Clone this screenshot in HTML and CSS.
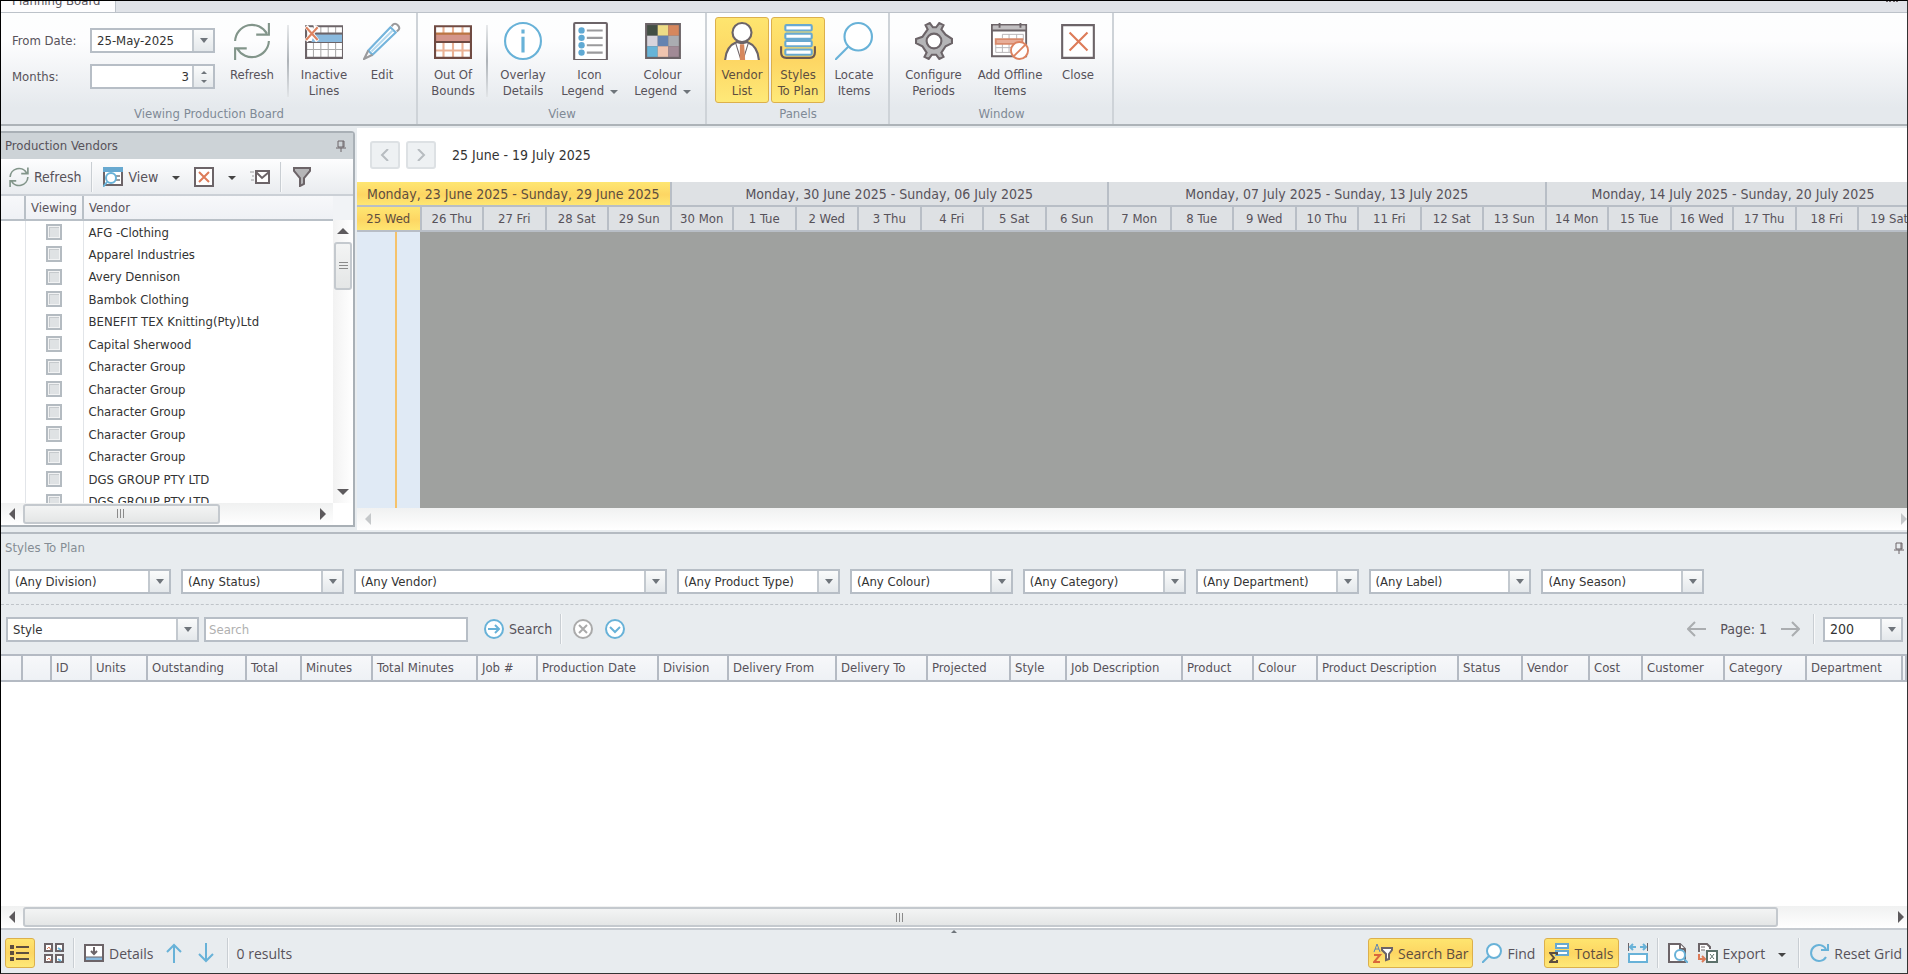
FILE: index.html
```
<!DOCTYPE html>
<html lang="en">
<head>
    <meta charset="UTF-8">
    <meta name="viewport" content="width=device-width, initial-scale=1.0">
    <title>Planning Board</title>
    <link rel="stylesheet" href="styles.css">
</head>
<body>
    <header>
        <div class="tabs">
            <a class="tab" href="#ribbon">Planning Board</a>
            <span class="tabs-more"></span>
        </div>

        <div class="ribbon" id="ribbon">
            <section class="group">
                <div class="group-items">
                    <div class="fields">
                        <label for="fromDate">From Date:</label>
                        <div class="combo">
                            <select id="fromDate"><option>25-May-2025</option></select>
                        </div>
                        <label for="months">Months:</label>
                        <div class="spinner">
                            <input type="text" id="months" value="3">
                            <span class="spin"><i class="caret up"></i><i class="caret"></i></span>
                        </div>
                    </div>
                    <button type="button" class="big w60">
                        <svg viewBox="0 0 36 36" fill="none" stroke="#82958a" stroke-width="2"><path d="M2 18A16 16 0 0 1 32 11M34 1V12H22M34 18A16 16 0 0 1 4 25M2 36V25H13"/></svg>
                        <span>Refresh</span>
                    </button>
                    <i class="sep tall"></i>
                    <button type="button" class="big w60">
                        <svg viewBox="0 0 36 36" fill="none"><path d="M1 4H35V34H1Z" fill="#fff"/><path d="M8 4V34M15 4V34M22 4V34M29 4V34M1 26H35" stroke="#aaa" /><path d="M9 11H36V20H6Z" fill="#8abade"/><path d="M1 11V34H36V4H10M1 12V4H8M9 11H35M1 19H35" stroke="#6c6468" stroke-width="2"/><path d="M9 12H35V19H6Z" fill="#8abade"/><path d="M1 4L12 18M12 4L1 18" stroke="#fff" stroke-width="4"/><path d="M1 5L12 17M12 5L1 17" stroke="#dd8360" stroke-width="2"/></svg>
                        <span>Inactive<br>Lines</span>
                    </button>
                    <button type="button" class="big w56">
                        <svg viewBox="0 0 36 36" fill="none" stroke-width="2"><path d="M5 27L26 5L31 10L9 31Z" fill="#fff" stroke="#74b4dc"/><path d="M8 28L28 8" stroke="#b5d9ee"/><path d="M27 4L29 2Q31 1 33 3Q35 5 34 7L32 9M5 27L1 35L9 31" stroke="#9a9a9c"/></svg>
                        <span>Edit</span>
                    </button>
                </div>
                <h2>Viewing Production Board</h2>
            </section>

            <section class="group">
                <div class="group-items">
                    <button type="button" class="big w56">
                        <svg viewBox="0 0 36 36" fill="none"><path d="M0 4H36V34H0Z" fill="#fff"/><path d="M9 4V34M18 4V34M27 4V34M0 27H36" stroke="#eab295" stroke-width="2"/><path d="M0 11H36V19H0Z" fill="#d4958a"/><path d="M0 11H36" stroke="#bb7542" stroke-width="2"/><path d="M0 19H36M1 4H35V34H1Z" stroke="#6f4a42" stroke-width="2"/></svg>
                        <span>Out Of<br>Bounds</span>
                    </button>
                    <i class="sep tall"></i>
                    <button type="button" class="big w60">
                        <svg viewBox="0 0 36 36" fill="none" stroke="#68b2d8"><circle cx="18" cy="18" r="17" fill="#fff" stroke-width="2"/><path d="M18 14V29M18 7V11" stroke-width="3"/></svg>
                        <span>Overlay<br>Details</span>
                    </button>
                    <button type="button" class="big w72">
                        <svg viewBox="0 0 36 36" fill="none"><rect x="3" y="1" width="31" height="35" rx="1" fill="#fff" stroke="#6c6468" stroke-width="2"/><g fill="#5fa9d3"><circle cx="10" cy="8" r="3"/><circle cx="10" cy="15" r="3"/><circle cx="10" cy="22" r="3"/><circle cx="10" cy="29" r="3"/></g><path d="M15 8H30M15 15H30M15 22H30M15 29H30" stroke="#9a9a9c" stroke-width="2"/></svg>
                        <span>Icon<br>Legend <i class="caret"></i></span>
                    </button>
                    <button type="button" class="big w72">
                        <svg viewBox="0 0 36 36"><path d="M1 1H35V35H1Z" fill="#6c6468"/><path d="M3 3h10v10H3z" fill="#434f44"/><path d="M13 3h10v10H13z" fill="#eddc86"/><path d="M23 3h10v10H23z" fill="#d6875d"/><path d="M3 13h10v10H3z" fill="#d8d4dc"/><path d="M13 13h10v10H13z" fill="#6583b0"/><path d="M23 13h10v10H23z" fill="#aaacb1"/><path d="M3 23h10v10H3z" fill="#67b4d8"/><path d="M13 23h10v10H13z" fill="#f0c4af"/><path d="M23 23h10v10H23z" fill="#a18a96"/></svg>
                        <span>Colour<br>Legend <i class="caret"></i></span>
                    </button>
                </div>
                <h2>View</h2>
            </section>

            <section class="group">
                <div class="group-items">
                    <button type="button" class="big w54 on">
                        <svg viewBox="0 0 36 36" fill="#fff" stroke="#6c6468" stroke-width="2"><circle cx="18" cy="10" r="9"/><path d="M2 36Q3 23 13 19Q18 21 23 19Q33 23 34 36" /><path d="M12 20L17 36M24 20L19 36" fill="none" stroke-width="1"/><path d="M16 21H20L21 36H16Z" fill="#d6875d" stroke="none"/></svg>
                        <span>Vendor<br>List</span>
                    </button>
                    <button type="button" class="big w54 on">
                        <svg viewBox="0 0 36 36" fill="#fff" stroke="#68a9d0" stroke-width="2"><path d="M2 23V29Q2 34 7 34H29Q34 34 34 29V23" fill="none" stroke="#6c5a50"/><rect x="6" y="3" width="25" height="5" rx="1"/><rect x="6" y="11" width="25" height="5" rx="1"/><rect x="6" y="18" width="25" height="5" rx="1"/><rect x="6" y="26" width="25" height="5" rx="1"/></svg>
                        <span>Styles<br>To Plan</span>
                    </button>
                    <button type="button" class="big w56">
                        <svg viewBox="0 0 36 36" fill="#fff" stroke="#68b2d8" stroke-width="2"><circle cx="22" cy="14" r="13"/><path d="M13 23L0 36"/></svg>
                        <span>Locate<br>Items</span>
                    </button>
                </div>
                <h2>Panels</h2>
            </section>

            <section class="group">
                <div class="group-items">
                    <button type="button" class="big w72">
                        <svg viewBox="0 0 36 36" fill="#b5b5b7" stroke="#6c6468" stroke-width="2"><path d="M12 7L10 3L14 1L17 5H20L23 1L27 3L25 7L29 12L35 16V20L29 23L25 29L27 33L23 35L20 31H16L13 35L9 33L11 29L7 23L1 20V16L7 14Z"/><circle cx="18" cy="18" r="7" fill="#fff"/></svg>
                        <span>Configure<br>Periods</span>
                    </button>
                    <button type="button" class="big w80">
                        <svg viewBox="0 0 40 38" fill="none" stroke="#6c6468" stroke-width="2"><path d="M1 2H37V35H1Z" fill="#fff"/><path d="M2 3H36V8H2Z" fill="#c2c0c2" stroke="none"/><path d="M1 8H37M9 0V5M31 0V5"/><path d="M12 12H34V18M12 12V16M19 12V31M27 12V31M5 22V31H26M5 26H28M12 20V31" stroke="#b6b3b6" stroke-width="1"/><path d="M5 17H33V22H5Z" stroke="#d88a6c" fill="#e7ad98"/><circle cx="30" cy="29" r="9" stroke="#dd8360" fill="#fff"/><path d="M24 35L36 23" stroke="#dd8360"/></svg>
                        <span>Add Offline<br>Items</span>
                    </button>
                    <button type="button" class="big w56">
                        <svg viewBox="0 0 36 36" fill="#fff" stroke="#6c6468" stroke-width="2"><path d="M3 3H33V34H3Z"/><path d="M10 10L27 27M27 10L10 27" stroke="#dd7b58"/></svg>
                        <span>Close</span>
                    </button>
                </div>
                <h2>Window</h2>
            </section>
        </div>
    </header>

    <main>
        <aside class="vendors">
            <h3>Production Vendors
                <svg class="pin" viewBox="0 0 10 12" fill="none" stroke="#6c6468"><path d="M2 1H8V7H2ZM7 1V7M0 8H10M5 8V12"/></svg>
            </h3>
            <div class="tools">
                <button type="button" class="tool">
                    <svg viewBox="0 0 36 36" fill="none" stroke="#82958a" stroke-width="3"><path d="M2 18A16 16 0 0 1 32 11M34 1V12H22M34 18A16 16 0 0 1 4 25M2 36V25H13"/></svg>Refresh</button>
                <i class="sep"></i>
                <button type="button" class="tool">
                    <svg viewBox="0 0 20 20" fill="#fff" stroke-width="2"><path d="M1 1H19V18H1Z" stroke="#6c6468"/><path d="M0 0H20V5H0Z" fill="#68a9d0"/><path d="M13 9H17M13 13H17" stroke="#9a9a9c"/><circle cx="8" cy="11" r="5" stroke="#68b2d8"/><path d="M4 15L0 20" stroke="#68b2d8"/></svg>View</button>
                <button type="button" class="drop" aria-label="View options"><i class="caret dark"></i></button>
                <button type="button" class="tool" aria-label="Clear">
                    <svg viewBox="0 0 20 20" fill="#fff" stroke="#6c6468" stroke-width="2"><path d="M1 1H19V19H1Z"/><path d="M5 5L15 15M15 5L5 15" stroke="#dd7b58"/></svg></button>
                <button type="button" class="drop" aria-label="Clear options"><i class="caret dark"></i></button>
                <button type="button" class="tool" aria-label="Mail">
                    <svg viewBox="0 0 20 20" fill="#fff" stroke="#6c6468" stroke-width="2"><path d="M6 4H19V16H6Z"/><path d="M6 5L12 11L19 5" fill="none"/><path d="M0 5H4M2 9H4M1 13H4" stroke="#9a9a9c" stroke-width="1"/></svg></button>
                <i class="sep"></i>
                <button type="button" class="tool" aria-label="Filter">
                    <svg viewBox="0 0 20 20" fill="#b5b5b7" stroke="#6c6468" stroke-width="2"><path d="M2 1H18V4L12 11V17L8 19V11L2 4Z"/></svg></button>
            </div>
            <div class="vendor-list">
                <table>
                    <thead>
                        <tr><th></th><th>Viewing</th><th>Vendor</th></tr>
                    </thead>
                    <tbody>
                        <tr><td></td><td><input type="checkbox" id="v1"></td><td><label for="v1">AFG -Clothing</label></td></tr>
                        <tr><td></td><td><input type="checkbox" id="v2"></td><td><label for="v2">Apparel Industries</label></td></tr>
                        <tr><td></td><td><input type="checkbox" id="v3"></td><td><label for="v3">Avery Dennison</label></td></tr>
                        <tr><td></td><td><input type="checkbox" id="v4"></td><td><label for="v4">Bambok Clothing</label></td></tr>
                        <tr><td></td><td><input type="checkbox" id="v5"></td><td><label for="v5">BENEFIT TEX Knitting(Pty)Ltd</label></td></tr>
                        <tr><td></td><td><input type="checkbox" id="v6"></td><td><label for="v6">Capital Sherwood</label></td></tr>
                        <tr><td></td><td><input type="checkbox" id="v7"></td><td><label for="v7">Character Group</label></td></tr>
                        <tr><td></td><td><input type="checkbox" id="v8"></td><td><label for="v8">Character Group</label></td></tr>
                        <tr><td></td><td><input type="checkbox" id="v9"></td><td><label for="v9">Character Group</label></td></tr>
                        <tr><td></td><td><input type="checkbox" id="v10"></td><td><label for="v10">Character Group</label></td></tr>
                        <tr><td></td><td><input type="checkbox" id="v11"></td><td><label for="v11">Character Group</label></td></tr>
                        <tr><td></td><td><input type="checkbox" id="v12"></td><td><label for="v12">DGS GROUP PTY LTD</label></td></tr>
                        <tr><td></td><td><input type="checkbox" id="v13"></td><td><label for="v13">DGS GROUP PTY LTD</label></td></tr>
                    </tbody>
                </table>
                <div class="vscroll">
                    <i class="arrow-up"></i>
                    <span class="thumb"><i class="grip-v"></i></span>
                    <i class="arrow-down"></i>
                </div>
            </div>
            <div class="hscroll vendor-scroll">
                <i class="arrow-left"></i>
                <div class="track"><span class="thumb"><i class="grip-h"></i></span></div>
                <i class="arrow-right"></i>
            </div>
        </aside>

        <section class="schedule">
            <div class="range">
                <button type="button" aria-label="Previous"><svg viewBox="0 0 12 12" fill="none" stroke="#b7bcc0" stroke-width="2"><path d="M9 0L3 6L9 12"/></svg></button>
                <button type="button" aria-label="Next"><svg viewBox="0 0 12 12" fill="none" stroke="#b7bcc0" stroke-width="2"><path d="M3 0L9 6L3 12"/></svg></button>
                <span>25 June - 19 July 2025</span>
            </div>
            <div class="calendar">
                <div class="weeks">
                    <div class="days5 now">Monday, 23 June 2025 - Sunday, 29 June 2025</div>
                    <div class="days7">Monday, 30 June 2025 - Sunday, 06 July 2025</div>
                    <div class="days7">Monday, 07 July 2025 - Sunday, 13 July 2025</div>
                    <div class="days6">Monday, 14 July 2025 - Sunday, 20 July 2025</div>
                </div>
                <div class="days">
                    <div class="now">25 Wed</div><div>26 Thu</div><div>27 Fri</div><div>28 Sat</div><div>29 Sun</div>
                    <div>30 Mon</div><div>1 Tue</div><div>2 Wed</div><div>3 Thu</div><div>4 Fri</div><div>5 Sat</div><div>6 Sun</div>
                    <div>7 Mon</div><div>8 Tue</div><div>9 Wed</div><div>10 Thu</div><div>11 Fri</div><div>12 Sat</div><div>13 Sun</div>
                    <div>14 Mon</div><div>15 Tue</div><div>16 Wed</div><div>17 Thu</div><div>18 Fri</div><div>19 Sat</div>
                </div>
                <div class="canvas"><div class="today"></div></div>
            </div>
            <div class="hscroll off">
                <i class="arrow-left"></i>
                <div class="track"></div>
                <i class="arrow-right"></i>
            </div>
        </section>
    </main>

    <section class="styles">
        <h3>Styles To Plan
            <svg class="pin" viewBox="0 0 10 12" fill="none" stroke="#6c6468"><path d="M2 1H8V7H2ZM7 1V7M0 8H10M5 8V12"/></svg>
        </h3>
        <div class="filters">
            <div class="combo"><select aria-label="Division"><option>(Any Division)</option></select></div>
            <div class="combo"><select aria-label="Status"><option>(Any Status)</option></select></div>
            <div class="combo"><select aria-label="Vendor"><option>(Any Vendor)</option></select></div>
            <div class="combo"><select aria-label="Product Type"><option>(Any Product Type)</option></select></div>
            <div class="combo"><select aria-label="Colour"><option>(Any Colour)</option></select></div>
            <div class="combo"><select aria-label="Category"><option>(Any Category)</option></select></div>
            <div class="combo"><select aria-label="Department"><option>(Any Department)</option></select></div>
            <div class="combo"><select aria-label="Label"><option>(Any Label)</option></select></div>
            <div class="combo"><select aria-label="Season"><option>(Any Season)</option></select></div>
        </div>
        <div class="search">
            <div class="combo field"><select aria-label="Search field"><option>Style</option></select></div>
            <input type="text" class="query" placeholder="Search" aria-label="Search text">
            <button type="button" class="tool go">
                <svg viewBox="0 0 20 20" fill="#fff" stroke="#68b2d8" stroke-width="2"><circle cx="10" cy="10" r="9"/><path d="M4 10H15M11 6L15 10L11 14" fill="none"/></svg>Search</button>
            <i class="sep"></i>
            <button type="button" class="tool round" aria-label="Clear search">
                <svg viewBox="0 0 20 20" fill="#fff" stroke="#aaa" stroke-width="2"><circle cx="10" cy="10" r="9"/><path d="M6 6L14 14M14 6L6 14"/></svg></button>
            <button type="button" class="tool round" aria-label="More">
                <svg viewBox="0 0 20 20" fill="#fff" stroke="#68b2d8" stroke-width="2"><circle cx="10" cy="10" r="9"/><path d="M5 8L10 13L15 8" fill="none"/></svg></button>
            <div class="pager">
                <button type="button" aria-label="Previous page"><svg viewBox="0 0 20 16" fill="none" stroke="#aaadb0" stroke-width="2"><path d="M19 8H1M8 1L1 8L8 15"/></svg></button>
                <span>Page: 1</span>
                <button type="button" aria-label="Next page"><svg viewBox="0 0 20 16" fill="none" stroke="#aaadb0" stroke-width="2"><path d="M1 8H19M12 1L19 8L12 15"/></svg></button>
                <i class="sep"></i>
                <div class="combo"><select aria-label="Page size"><option>200</option></select></div>
            </div>
        </div>
        <div class="grid">
            <table>
                <thead>
                    <tr>
                        <th></th><th></th><th>ID</th><th>Units</th><th>Outstanding</th><th>Total</th><th>Minutes</th>
                        <th>Total Minutes</th><th>Job #</th><th>Production Date</th><th>Division</th><th>Delivery From</th>
                        <th>Delivery To</th><th>Projected</th><th>Style</th><th>Job Description</th><th>Product</th>
                        <th>Colour</th><th>Product Description</th><th>Status</th><th>Vendor</th><th>Cost</th>
                        <th>Customer</th><th>Category</th><th>Department</th><th></th>
                    </tr>
                </thead>
            </table>
        </div>
        <div class="hscroll grid-scroll">
            <i class="arrow-left"></i>
            <div class="track"><span class="thumb"><i class="grip-h"></i></span></div>
            <i class="arrow-right"></i>
        </div>
        <div class="splitter"><i class="caret up"></i></div>
        <footer>
            <button type="button" class="tool on" aria-label="List view">
                <svg viewBox="0 0 20 20" fill="none" stroke="#5d4e3f" stroke-width="2"><path d="M6 4H19M6 10H19M6 16H19"/><path d="M1 3h2v2h-2zM1 9h2v2h-2zM1 15h2v2h-2z"/></svg></button>
            <button type="button" class="tool" aria-label="Tile view">
                <svg viewBox="0 0 20 20" fill="#fff" stroke="#6c6468" stroke-width="2"><path d="M1 1h7v7h-7zM12 1h7v7h-7zM1 12h7v7h-7zM12 12h7v7h-7z"/><path d="M3 6L5 4L7 7M3 17L5 15L7 18" stroke="#dd7b58" fill="none" stroke-width="1"/><path d="M14 5L17 7M14 16L17 18" stroke="#68b2d8"/></svg></button>
            <i class="sep"></i>
            <button type="button" class="tool">
                <svg viewBox="0 0 20 20" fill="#fff" stroke="#6c6468" stroke-width="2"><path d="M1 2H19V18H1Z"/><path d="M2 14H18V17H2Z" fill="#8abade" stroke="none"/><path d="M1 14H19" stroke-width="1"/><path d="M10 4V11M7 8L10 11L13 8" fill="none"/></svg>Details</button>
            <button type="button" class="tool move" aria-label="Up">
                <svg viewBox="0 0 20 20" fill="none" stroke="#68b2d8" stroke-width="2"><path d="M10 20V2M3 9L10 2L17 9"/></svg></button>
            <button type="button" class="tool move" aria-label="Down">
                <svg viewBox="0 0 20 20" fill="none" stroke="#68b2d8" stroke-width="2"><path d="M10 0V18M3 11L10 18L17 11"/></svg></button>
            <i class="sep"></i>
            <span>0 results</span>
            <div class="footer-right">
                <button type="button" class="tool on">
                    <svg viewBox="0 0 20 20" fill="none" stroke-width="2"><path d="M1 9L4 1L7 9M2 6H6" stroke="#5d83b4" stroke-width="1"/><path d="M1 12H7L1 19H7" stroke="#d9683c"/><path d="M9 5H19V7L16 11V16L13 17V11L9 7Z" fill="#fff" stroke="#6c6468"/></svg>Search Bar</button>
                <button type="button" class="tool">
                    <svg viewBox="0 0 20 20" fill="#fff" stroke="#68b2d8" stroke-width="2"><circle cx="12" cy="8" r="7"/><path d="M7 13L0 20"/></svg>Find</button>
                <button type="button" class="tool on">
                    <svg viewBox="0 0 20 20" fill="#fff" stroke="#68a9d0"><path d="M7 1H19V5H7ZM7 8H19V12H7Z" stroke-width="2"/><path d="M8 12V10H1L5 15L1 19H8V17" stroke="#5d4e3f" fill="none" stroke-width="2"/></svg>Totals</button>
                <button type="button" class="tool" aria-label="Fit columns">
                    <svg viewBox="0 0 20 20" fill="#fff" stroke="#68b2d8" stroke-width="2"><path d="M1 11H19V19H1Z"/><path d="M0 0V8M20 0V8" stroke="#6c6468"/><path d="M2 4H8M5 1L2 4L5 7M18 4H12M15 1L18 4L15 7" fill="none"/></svg></button>
                <i class="sep"></i>
                <button type="button" class="tool" aria-label="Preview">
                    <svg viewBox="0 0 20 20" fill="#fff" stroke="#6c6468" stroke-width="2"><path d="M1 1H12L17 6V19H1Z"/><path d="M12 1V6H17"/><circle cx="12" cy="12" r="5" stroke="#68b2d8"/><path d="M16 16L20 20" stroke="#68b2d8"/></svg></button>
                <button type="button" class="tool">
                    <svg viewBox="0 0 20 20" fill="none" stroke="#6c6468"><path d="M1 9V1H9L12 4V6" fill="#fff" stroke-width="2"/><path d="M3 4H7M3 7H7"/><path d="M1 11V16H6M4 13L7 16L4 19" stroke="#dd7b58" stroke-width="2"/><path d="M9 8H19V19H9Z" fill="#fff" stroke="#5b706a" stroke-width="2"/><path d="M12 11L16 16M16 11L12 16" stroke="#5b706a"/></svg>Export</button>
                <button type="button" class="drop" aria-label="Export options"><i class="caret dark"></i></button>
                <i class="sep"></i>
                <button type="button" class="tool">
                    <svg viewBox="0 0 20 20" fill="none" stroke="#68b2d8" stroke-width="2"><path d="M17 14A8 8 0 1 1 17 6M19 1V7H12"/></svg>Reset Grid</button>
            </div>
        </footer>
    </section>
</body>
</html>
```
FILE: styles.css
```
* {
  box-sizing: border-box;
}

body {
  margin: 0;
  height: 100vh;
  display: flex;
  flex-direction: column;
  overflow: hidden;
  border: 1px solid #000;
  border-right-color: #333;
  border-bottom-color: #333;
  background-color: #e8ecef;
  font-family: "DejaVu Sans Condensed", "DejaVu Sans", sans-serif;
  font-size: 13px;
  color: #57525a;
}

button, input, select {
  font: inherit;
  color: inherit;
  margin: 0;
}

button {
  padding: 0;
  border: 1px solid transparent;
  border-radius: 3px;
  background: none;
  cursor: pointer;
}

svg {
  display: block;
  flex: none;
}

h2, h3 {
  margin: 0;
  font-size: 13px;
  font-weight: normal;
}

table {
  border-collapse: collapse;
  table-layout: fixed;
  width: 100%;
}

th {
  font-weight: normal;
  text-align: left;
}

.on {
  border-color: #dcb04c;
  background: linear-gradient(#fee56f, #fdd663 50%, #fee978);
  color: #5d4e3f;
}

/* arrows and separators */
.caret {
  display: inline-block;
  border: 4px solid transparent;
  border-top: 4px solid #6f757b;
  border-bottom: 0;
  vertical-align: middle;
}

.caret.up {
  border-top: 0;
  border-bottom: 4px solid #6f757b;
}

.caret.dark {
  border-top-color: #444;
}

.sep {
  width: 2px;
  height: 30px;
  flex: none;
  background: linear-gradient(90deg, #c9ced3 50%, #f8f9fa 50%);
}

.sep.tall {
  height: 72px;
  margin: 8px 5px 0;
  background: linear-gradient(#e8eaec, #aeb3b8 50%, #e2e5e8);
}

/* combo boxes */
.combo {
  position: relative;
  height: 25px;
}

.combo select {
  width: 100%;
  height: 100%;
  padding: 0 24px 0 5px;
  appearance: none;
  border: 2px solid #b7bec6;
  border-radius: 0;
  background-color: #fff;
  color: #333;
}

.combo::after {
  content: "";
  position: absolute;
  top: 2px;
  right: 2px;
  bottom: 2px;
  width: 19px;
  border-left: 2px solid #c3c9cf;
  background: linear-gradient(#fafbfb, #e4e8eb);
  pointer-events: none;
}

.combo::before {
  content: "";
  position: absolute;
  z-index: 1;
  top: 10px;
  right: 7px;
  border: 4px solid transparent;
  border-top: 5px solid #6f757b;
  border-bottom: 0;
  pointer-events: none;
}

/* ribbon */
.tabs {
  height: 12px;
  display: flex;
  justify-content: space-between;
  align-items: flex-end;
  overflow: hidden;
  background-color: #e0e3e8;
  border-bottom: 1px solid #bcc2c9;
}

.tab {
  height: 24px;
  width: 115px;
  padding-left: 11px;
  line-height: 26px;
  background-color: #fdfdfe;
  border-right: 1px solid #bcc2c9;
  color: #57525a;
  text-decoration: none;
}

.tabs-more {
  width: 12px;
  height: 12px;
  margin-right: 9px;
  border-top: 2px dotted #6c6468;
}

.ribbon {
  display: flex;
  height: 113px;
  background: linear-gradient(#fdfefe, #fdfdfe 25%, #e5e9ed 85%);
  border-bottom: 2px solid #adb3b8;
}

.group {
  display: flex;
  flex-direction: column;
  padding: 4px 6px 0 7px;
  border-right: 2px solid #ced3d8;
}

.group-items {
  display: flex;
  flex: 1;
}

.group h2 {
  padding-bottom: 1px;
  line-height: 18px;
  text-align: center;
  color: #7f8a96;
}

.fields {
  display: grid;
  grid-template-columns: 78px 125px;
  row-gap: 11px;
  align-content: start;
  align-items: center;
  padding: 11px 7px 0 4px;
}

.spinner {
  display: flex;
  height: 25px;
  border: 2px solid #b7bec6;
  background-color: #fff;
}

.spinner input {
  width: 100px;
  padding: 0 3px;
  border: 0;
  background: none;
  text-align: right;
  color: #333;
}

.spin {
  flex: 1;
  display: flex;
  flex-direction: column;
  align-items: center;
  justify-content: center;
  gap: 6px;
  border-left: 2px solid #c3c9cf;
  background: linear-gradient(#fafbfb, #e4e8eb);
}

.spin .caret {
  border-width: 3px;
  border-bottom-width: 0;
}

.spin .caret.up {
  border-top-width: 0;
  border-bottom-width: 3px;
}

.big {
  height: 86px;
  display: flex;
  flex-direction: column;
  align-items: center;
  padding-top: 4px;
  line-height: 16px;
  white-space: nowrap;
}

.big svg {
  width: 38px;
  height: 38px;
  margin-bottom: 7px;
}

.w54 { width: 54px; margin: 0 1px; }
.w56 { width: 56px; }
.w60 { width: 60px; }
.w72 { width: 73px; }
.w80 { width: 80px; }

.big .caret {
  margin-left: 2px;
}

/* vendors panel */
main {
  flex: 12 1 0;
  min-height: 0;
  display: flex;
  gap: 2px;
}

.vendors {
  width: 354px;
  flex: none;
  display: flex;
  flex-direction: column;
  margin: 5px 0 5px;
  border: 2px solid #a9b0b6;
  border-left: 0;
  border-radius: 0 4px 0 0;
  background-color: #fff;
}

.vendors h3 {
  height: 26px;
  line-height: 26px;
  background-color: #cdd3d7;
}

h3 {
  display: flex;
  justify-content: space-between;
  align-items: center;
  padding: 0 7px 0 4px;
}

.pin {
  width: 10px;
  height: 12px;
}

.tools {
  height: 37px;
  display: flex;
  align-items: center;
  gap: 9px;
  padding: 0 7px;
  background: linear-gradient(#fdfdfe, #e9ecef);
  border-bottom: 2px solid #cbd0d6;
}

.tool {
  height: 30px;
  display: flex;
  align-items: center;
  gap: 5px;
  font-size: 14px;
  white-space: nowrap;
}

.tool svg {
  width: 20px;
  height: 20px;
}

.drop {
  width: 16px;
  height: 30px;
}

.vendor-list {
  flex: 1;
  min-height: 0;
  display: flex;
  overflow: hidden;
  background: linear-gradient(#f1f3f6 24px, #fff 24px);
}

.vendor-list table {
  align-self: flex-start;
}

.vendor-list th {
  height: 24px;
  padding: 0 5px;
  border-right: 2px solid #b9c0c7;
  border-bottom: 2px solid #b9c0c7;
  background: linear-gradient(#f7f8fa, #eff1f5);
}

.vendor-list th:nth-child(1) { width: 24px; }
.vendor-list th:nth-child(2) { width: 58px; }
.vendor-list th:nth-child(3) { border-right: 0; }

.vendor-list td {
  height: 23px;
  padding: 0 5px;
  border-right: 1px solid #e2e5e9;
  white-space: nowrap;
  color: #333;
}

.vendor-list td:nth-child(2) { text-align: center; }
.vendor-list td:nth-child(3) { border-right: 0; }
.vendor-list tr:nth-child(even) td { height: 22px; }

.vendor-list input {
  display: block;
  width: 16px;
  height: 16px;
  margin: 0 auto;
  appearance: none;
  border: 2px solid #b4bbc1;
  background-color: #dfe2e4;
  box-shadow: inset 0 0 0 1px #f2f3f4, inset 2px 2px 0 #c6cacd;
}

.vscroll {
  width: 20px;
  flex: none;
  display: flex;
  flex-direction: column;
  align-items: center;
  margin-top: 24px;
  padding: 8px 0;
  background: linear-gradient(90deg, #f2f2f2, #fff);
}

.thumb {
  display: flex;
  align-items: center;
  justify-content: center;
  border: 2px solid #c4c9ce;
  border-radius: 3px;
  background: linear-gradient(#f3f4f4, #e4e6e6);
}

.vscroll .thumb {
  width: 18px;
  height: 48px;
  margin: 8px 0 auto;
}

.grip-v {
  width: 9px;
  height: 9px;
  background: repeating-linear-gradient(#8b8b8b 0 1px, transparent 1px 3px);
}

.grip-h {
  width: 9px;
  height: 9px;
  background: repeating-linear-gradient(90deg, #8b8b8b 0 1px, transparent 1px 3px);
}

.arrow-up, .arrow-down {
  border: 6px solid transparent;
  border-bottom: 6px solid #5d5a5d;
  border-top: 0;
}

.arrow-down {
  border-top: 6px solid #5d5a5d;
  border-bottom: 0;
}

.arrow-left, .arrow-right {
  flex: none;
  border: 6px solid transparent;
  border-right: 6px solid #5d5a5d;
  border-left: 0;
}

.arrow-right {
  border-left: 6px solid #5d5a5d;
  border-right: 0;
}

.hscroll {
  height: 22px;
  flex: none;
  display: flex;
  align-items: center;
  gap: 8px;
  padding: 0 7px 0 8px;
  background: linear-gradient(#f0f1f1, #fff);
}

.track {
  flex: 1;
}

.track .thumb {
  height: 20px;
}

.vendor-scroll {
  margin-right: 20px;
}

.vendor-scroll .track .thumb {
  width: 68%;
}

.off {
  padding-right: 0;
}

.off .arrow-left { border-right-color: #c5c8ca; }
.off .arrow-right { border-left-color: #c5c8ca; }

/* schedule */
.schedule {
  flex: 1;
  min-width: 0;
  display: flex;
  flex-direction: column;
  margin: 2px 0;
  background-color: #fff;
}

.range {
  height: 54px;
  display: flex;
  align-items: center;
  gap: 6px;
  padding-left: 13px;
  font-size: 14px;
  color: #333;
}

.range button {
  width: 30px;
  height: 28px;
  display: flex;
  align-items: center;
  justify-content: center;
  border: 2px solid #dde1e4;
  background-color: #eef1f3;
}

.range svg {
  width: 12px;
  height: 12px;
}

.range span {
  margin-left: 10px;
}

.calendar {
  flex: 1;
  min-height: 0;
  display: flex;
  flex-direction: column;
  overflow: hidden;
  background-color: #9fa19f;
}

/* one day is 100% / 24.8 wide, the last one runs off the edge */
.weeks, .days {
  display: flex;
  flex: none;
  height: 25px;
  line-height: 24px;
  text-align: center;
  white-space: nowrap;
}

.weeks {
  font-size: 14px;
}

.weeks div, .days div {
  flex: 0 0 calc(100% / 24.8);
  border-left: 2px solid #b8bec6;
  border-bottom: 2px solid #b8bec6;
  background-color: #dee1e4;
}

.weeks .days5 { flex-basis: calc(500% / 24.8); }
.weeks .days6 { flex-basis: calc(600% / 24.8); }
.weeks .days7 { flex-basis: calc(700% / 24.8); }

.weeks .now, .days .now {
  border-left: 0;
  background: linear-gradient(#fee672, #fdd663 55%, #fee672);
  color: #5d4e3f;
}

.canvas {
  flex: 1;
}

.today {
  width: calc(100% / 24.8);
  height: 100%;
  background: linear-gradient(#f5c26b, #f5c26b) 62% 0 / 2px 100% no-repeat #e0eaf5;
}

/* styles to plan */
.styles {
  flex: 13 1 0;
  min-height: 0;
  display: flex;
  flex-direction: column;
  border-top: 2px solid #b4bac1;
}

.styles h3 {
  height: 28px;
  padding-right: 3px;
  color: #858c94;
}

.filters {
  width: 89%;
  display: grid;
  grid-template-columns: 13fr 13fr 25fr repeat(6, 13fr);
  gap: 10px;
  margin: 7px 0 10px 7px;
}

.search {
  height: 50px;
  display: flex;
  align-items: center;
  padding: 0 4px 0 5px;
  border-top: 1px dashed #bfc4c9;
}

.field {
  width: 193px;
}

.query {
  width: 264px;
  height: 25px;
  margin: 0 15px 0 5px;
  padding: 0 3px;
  border: 2px solid #b7bec6;
  background-color: #fff;
}

.query::placeholder {
  color: #b0b0b0;
}

.go {
  margin-right: 7px;
}

.round {
  margin-left: 10px;
}

.pager {
  display: flex;
  align-items: center;
  gap: 12px;
  margin-left: auto;
  font-size: 14px;
}

.pager svg {
  width: 20px;
  height: 16px;
}

.pager .combo {
  width: 80px;
  margin-left: -4px;
}

.grid {
  flex: 1;
  min-height: 0;
  overflow: hidden;
  background-color: #fff;
}

.grid th {
  height: 26px;
  padding: 0 5px 0 4px;
  border: 1px solid #b4bac3;
  border-width: 2px 2px 2px 0;
  background: linear-gradient(#f7f8fa, #eef1f5);
  white-space: nowrap;
}

.grid th:nth-child(1) { width: 21px; }
.grid th:nth-child(2) { width: 29px; }
.grid th:nth-child(3) { width: 40px; }
.grid th:nth-child(4) { width: 56px; }
.grid th:nth-child(5) { width: 99px; }
.grid th:nth-child(6) { width: 55px; }
.grid th:nth-child(7) { width: 71px; }
.grid th:nth-child(8) { width: 105px; }
.grid th:nth-child(9) { width: 60px; }
.grid th:nth-child(10) { width: 121px; }
.grid th:nth-child(11) { width: 70px; }
.grid th:nth-child(12) { width: 108px; }
.grid th:nth-child(13) { width: 91px; }
.grid th:nth-child(14) { width: 83px; }
.grid th:nth-child(15) { width: 56px; }
.grid th:nth-child(16) { width: 116px; }
.grid th:nth-child(17) { width: 71px; }
.grid th:nth-child(18) { width: 64px; }
.grid th:nth-child(19) { width: 141px; }
.grid th:nth-child(20) { width: 64px; }
.grid th:nth-child(21) { width: 67px; }
.grid th:nth-child(22) { width: 53px; }
.grid th:nth-child(23) { width: 82px; }
.grid th:nth-child(24) { width: 82px; }
.grid th:nth-child(25) { width: 96px; }
.grid th:nth-child(26) { padding: 0; }

.grid-scroll {
  padding-right: 3px;
}

.grid-scroll .track .thumb {
  width: 94%;
}

.splitter {
  height: 9px;
  flex: none;
  line-height: 0;
  text-align: center;
  border-top: 2px solid #c5cad0;
}

.splitter .caret {
  border-width: 0 3px 3px;
}

footer {
  height: 36px;
  flex: none;
  display: flex;
  align-items: center;
  gap: 8px;
  padding: 0 4px 4px;
  font-family: "Open Sans", sans-serif;
  font-size: 14px;
}

footer .on {
  padding: 0 4px;
}

.move {
  margin-right: 2px;
}

.footer-right {
  display: flex;
  align-items: center;
  gap: 8px;
  margin-left: auto;
}
```
